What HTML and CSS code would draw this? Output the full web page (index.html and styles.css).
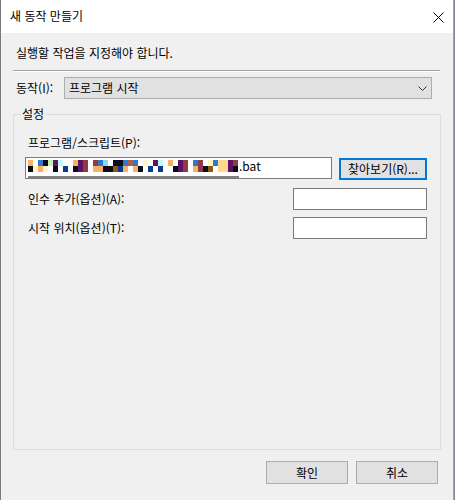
FILE: index.html
```html
<!DOCTYPE html>
<html lang="ko">
<head>
<meta charset="utf-8">
<title>새 동작 만들기</title>
<link rel="stylesheet" href="styles.css">
</head>
<body>
<div class="window">
  <div class="titlebar">
    <span class="title">새 동작 만들기</span>
    <svg class="close" width="11" height="11" viewBox="0 0 11 11"><path d="M0.5 0.5 L10.5 10.5 M10.5 0.5 L0.5 10.5" stroke="#000" stroke-width="1" fill="none"/></svg>
  </div>
  <div class="main">
    <div class="intro">실행할 작업을 지정해야 합니다.</div>
    <div class="sep"></div>
    <div class="action-row">
      <span class="action-label">동작(I):</span>
      <div class="combo">
        <span>프로그램 시작</span>
        <svg width="9" height="5" viewBox="0 0 9 5"><path d="M0.5 0.5 L4.5 4.5 L8.5 0.5" stroke="#333" stroke-width="1" fill="none"/></svg>
      </div>
    </div>
    <div class="group">
      <span class="legend">설정</span>
      <div class="field-label">프로그램/스크립트(P):</div>
      <div class="path-row">
        <div class="textbox path">
          <span class="mosaic">
            <span class="col"><i class="o"></i><i class="k"></i></span>
            <span class="col"><i class="w"></i><i class="y"></i></span>
            <span class="col"><i class="b"></i><i class="o"></i></span>
            <span class="col"><i class="k"></i><i class="y"></i></span>
            <span class="col"><i class="g"></i><i class="w"></i></span>
            <span class="col"><i class="p"></i><i class="k"></i></span>
            <span class="col"><i class="c"></i><i class="w"></i></span>
            <span class="col"><i class="w"></i><i class="n"></i></span>
            <span class="col"><i class="w"></i><i class="w"></i></span>
            <span class="col"><i class="o"></i><i class="k"></i></span>
            <span class="col"><i class="p"></i><i class="p"></i></span>
            <span class="col"><i class="m"></i><i class="m"></i></span>
            <span class="col"><i class="w"></i><i class="w"></i></span>
            <span class="col"><i class="m"></i><i class="o"></i></span>
            <span class="col"><i class="b"></i><i class="o"></i></span>
            <span class="col"><i class="lb"></i><i class="k"></i></span>
            <span class="col"><i class="w"></i><i class="k"></i></span>
            <span class="col"><i class="k"></i><i class="br"></i></span>
            <span class="col"><i class="k"></i><i class="n"></i></span>
            <span class="col"><i class="b"></i><i class="o"></i></span>
            <span class="col"><i class="s"></i><i class="w"></i></span>
            <span class="col"><i class="b"></i><i class="o"></i></span>
            <span class="col"><i class="w"></i><i class="k"></i></span>
            <span class="col"><i class="y"></i><i class="w"></i></span>
            <span class="col"><i class="w"></i><i class="n"></i></span>
            <span class="col"><i class="p"></i><i class="w"></i></span>
            <span class="col"><i class="c"></i><i class="n"></i></span>
            <span class="col"><i class="w"></i><i class="w"></i></span>
            <span class="col"><i class="o"></i><i class="w"></i></span>
            <span class="col"><i class="w"></i><i class="k"></i></span>
            <span class="col"><i class="p"></i><i class="p"></i></span>
            <span class="col"><i class="m"></i><i class="m"></i></span>
            <span class="col"><i class="w"></i><i class="w"></i></span>
            <span class="col"><i class="b"></i><i class="o"></i></span>
            <span class="col"><i class="m"></i><i class="m"></i></span>
            <span class="col"><i class="w"></i><i class="k"></i></span>
            <span class="col"><i class="y"></i><i class="br"></i></span>
            <span class="col"><i class="b"></i><i class="w"></i></span>
            <span class="col"><i class="t"></i><i class="t"></i></span>
            <span class="col"><i class="t"></i><i class="t"></i></span>
            <span class="col"><i class="p"></i><i class="p"></i></span>
            <span class="col"><i class="m"></i><i class="k"></i></span>
          </span><span class="ext">.bat</span>
          <span class="hscroll"></span>
        </div>
        <div class="btn focused">찾아보기(R)...</div>
      </div>
      <div class="opt-row">
        <span class="opt-label">인수 추가(옵션)(A):</span>
        <div class="textbox opt"></div>
      </div>
      <div class="opt-row second">
        <span class="opt-label">시작 위치(옵션)(T):</span>
        <div class="textbox opt"></div>
      </div>
    </div>
    <div class="footer">
      <div class="btn dlg">확인</div>
      <div class="btn dlg">취소</div>
    </div>
  </div>
</div>
</body>
</html>
```

FILE: styles.css
```css
html, body {
  margin: 0;
  padding: 0;
}
body {
  background: #7d8894;
  font-family: "Noto Sans CJK KR", "Noto Sans", sans-serif;
  font-size: 12px;
  color: #000;
}
.window {
  width: 452px;
  height: 500px;
  background: #f0f0f0;
  border-left: 1px solid #7a7a7a;
  border-right: 1px solid #a3a3a3;
}
.titlebar {
  height: 33px;
  background: #fff;
  display: flex;
  align-items: center;
  justify-content: space-between;
  padding: 0 9px 0 9px;
}
.title {
  line-height: 16px;
  margin-top: -1px;
}
.close {
  display: block;
  margin-top: 1px;
}
.main {
  padding: 12px 12px 0 12px;
}
.intro {
  margin-left: 3px;
  line-height: 16px;
  height: 16px;
}
.sep {
  margin-top: 9px;
  width: 427px;
  border-top: 1px solid #a0a0a0;
  border-bottom: 1px solid #ffffff;
}
.action-row {
  margin-top: 5px;
  display: flex;
  align-items: center;
  height: 22px;
}
.action-label {
  margin-left: 3px;
  width: 48px;
  line-height: 16px;
}
.combo {
  box-sizing: border-box;
  width: 368px;
  height: 22px;
  border: 1px solid #adadad;
  background: #e1e1e1;
  display: flex;
  align-items: center;
  justify-content: space-between;
  padding: 0 4px 0 4px;
  line-height: 16px;
}
.combo svg {
  display: block;
}
.group {
  position: relative;
  box-sizing: border-box;
  margin-top: 15px;
  width: 428px;
  height: 336px;
  border: 1px solid #dcdcdc;
  padding: 0 0 0 11px;
}
.legend {
  position: absolute;
  top: -9px;
  left: 7px;
  padding: 0 1px;
  background: #f0f0f0;
  line-height: 16px;
}
.field-label {
  margin-top: 20px;
  margin-left: 3px;
  line-height: 16px;
  height: 16px;
}
.path-row {
  margin-top: 6px;
  display: flex;
  align-items: flex-start;
}
.textbox {
  position: relative;
  box-sizing: border-box;
  height: 22px;
  border: 1px solid #7a7a7a;
  background: #fff;
}
.path {
  width: 307px;
  display: flex;
  align-items: flex-start;
  padding: 0 0 0 2px;
}
.mosaic {
  display: flex;
  margin-top: 2px;
}
.col {
  display: flex;
  flex-direction: column;
  width: 5px;
}
.col i {
  display: block;
  width: 5px;
  height: 6px;
}
.w { background: transparent; }
.k { background: #0c0c18; }
.o { background: #f7b265; }
.y { background: #fff5c2; }
.b { background: #2f78cf; }
.lb { background: #8fd6f6; }
.g { background: #c6f0b4; }
.p { background: #5c1462; }
.m { background: #8c3c44; }
.n { background: #0c3a8c; }
.c { background: #c4f8f6; }
.t { background: #ffd890; }
.br { background: #8a5a12; }
.s { background: #a86050; }
.ext {
  line-height: 16px;
  margin-left: 1px;
}
.hscroll {
  position: absolute;
  left: 2px;
  bottom: 0;
  width: 211px;
  height: 2px;
  background: #808080;
}
.btn {
  box-sizing: border-box;
  display: flex;
  align-items: center;
  justify-content: center;
  background: #e1e1e1;
  border: 1px solid #adadad;
  line-height: 16px;
}
.focused {
  margin-left: 7px;
  margin-top: 1px;
  width: 88px;
  height: 22px;
  border: 2px solid #0078d7;
}
.opt-row {
  margin-top: 8px;
  width: 402px;
  display: flex;
  align-items: center;
  justify-content: space-between;
}
.opt-row.second {
  margin-top: 7px;
}
.opt-label {
  margin-left: 3px;
  line-height: 16px;
}
.opt {
  width: 134px;
}
.footer {
  margin-top: 11px;
  display: flex;
  justify-content: flex-end;
  gap: 8px;
  padding-right: 3px;
}
.dlg {
  width: 82px;
  height: 23px;
}
```
